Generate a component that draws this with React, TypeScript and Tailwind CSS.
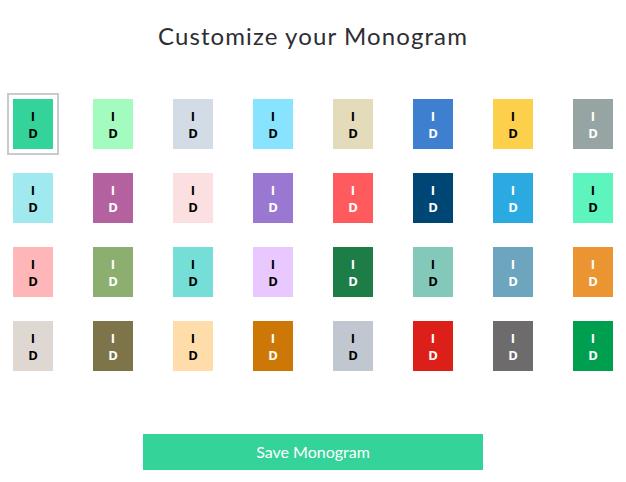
import { useState } from "react";

type Swatch = { bg: string; light: boolean };

const SWATCHES: Swatch[] = [
  { bg: "#34d399", light: false },
  { bg: "#a4fbc0", light: false },
  { bg: "#d3dce6", light: false },
  { bg: "#87e3fe", light: false },
  { bg: "#e3dbba", light: false },
  { bg: "#3e7fd0", light: true },
  { bg: "#fcd04b", light: false },
  { bg: "#96a5a3", light: true },

  { bg: "#a0e9ef", light: false },
  { bg: "#b4629f", light: true },
  { bg: "#fbdfe1", light: false },
  { bg: "#9a78d2", light: true },
  { bg: "#ff5a5e", light: true },
  { bg: "#004675", light: true },
  { bg: "#2baae1", light: true },
  { bg: "#5df4be", light: false },

  { bg: "#feb6b9", light: false },
  { bg: "#8caf6f", light: true },
  { bg: "#75ded6", light: false },
  { bg: "#e8c8ff", light: false },
  { bg: "#1e7c47", light: true },
  { bg: "#83c8b9", light: false },
  { bg: "#6da5bf", light: true },
  { bg: "#ea9432", light: true },

  { bg: "#dfd8d2", light: false },
  { bg: "#7d744a", light: true },
  { bg: "#feddaa", light: false },
  { bg: "#cd7806", light: true },
  { bg: "#c1c7d0", light: false },
  { bg: "#dc1f18", light: true },
  { bg: "#6d6b6c", light: true },
  { bg: "#009e4f", light: true },
];

export default function App() {
  const [selected, setSelected] = useState(0);

  return (
    <div className="w-[626px] h-[482px] bg-white flex flex-col items-center pt-5 font-['Lato','Liberation_Sans',sans-serif]">
      <h1 className="text-[24px] leading-8 tracking-[1.1px] text-[#2d2d33]">
        Customize your Monogram
      </h1>

      <div className="mt-[41px] grid grid-cols-8 gap-x-[28px] gap-y-[12px]">
        {SWATCHES.map((s, i) => (
          <button
            key={i}
            type="button"
            onClick={() => setSelected(i)}
            className={
              "p-1 border-2 " +
              (i === selected ? "border-[#c8cbce]" : "border-transparent")
            }
          >
            <div
              className={
                "w-10 h-[50px] flex flex-col items-center justify-center gap-[5px] text-[13px] leading-3 font-bold font-['Open_Sans',sans-serif] " +
                (s.light ? "text-white" : "text-black")
              }
              style={{ backgroundColor: s.bg }}
            >
              <span>I</span>
              <span>D</span>
            </div>
          </button>
        ))}
      </div>

      <button
        type="button"
        className="mt-[57px] w-[340px] h-9 bg-[#34d399] text-white text-[16px]"
      >
        Save Monogram
      </button>
    </div>
  );
}
